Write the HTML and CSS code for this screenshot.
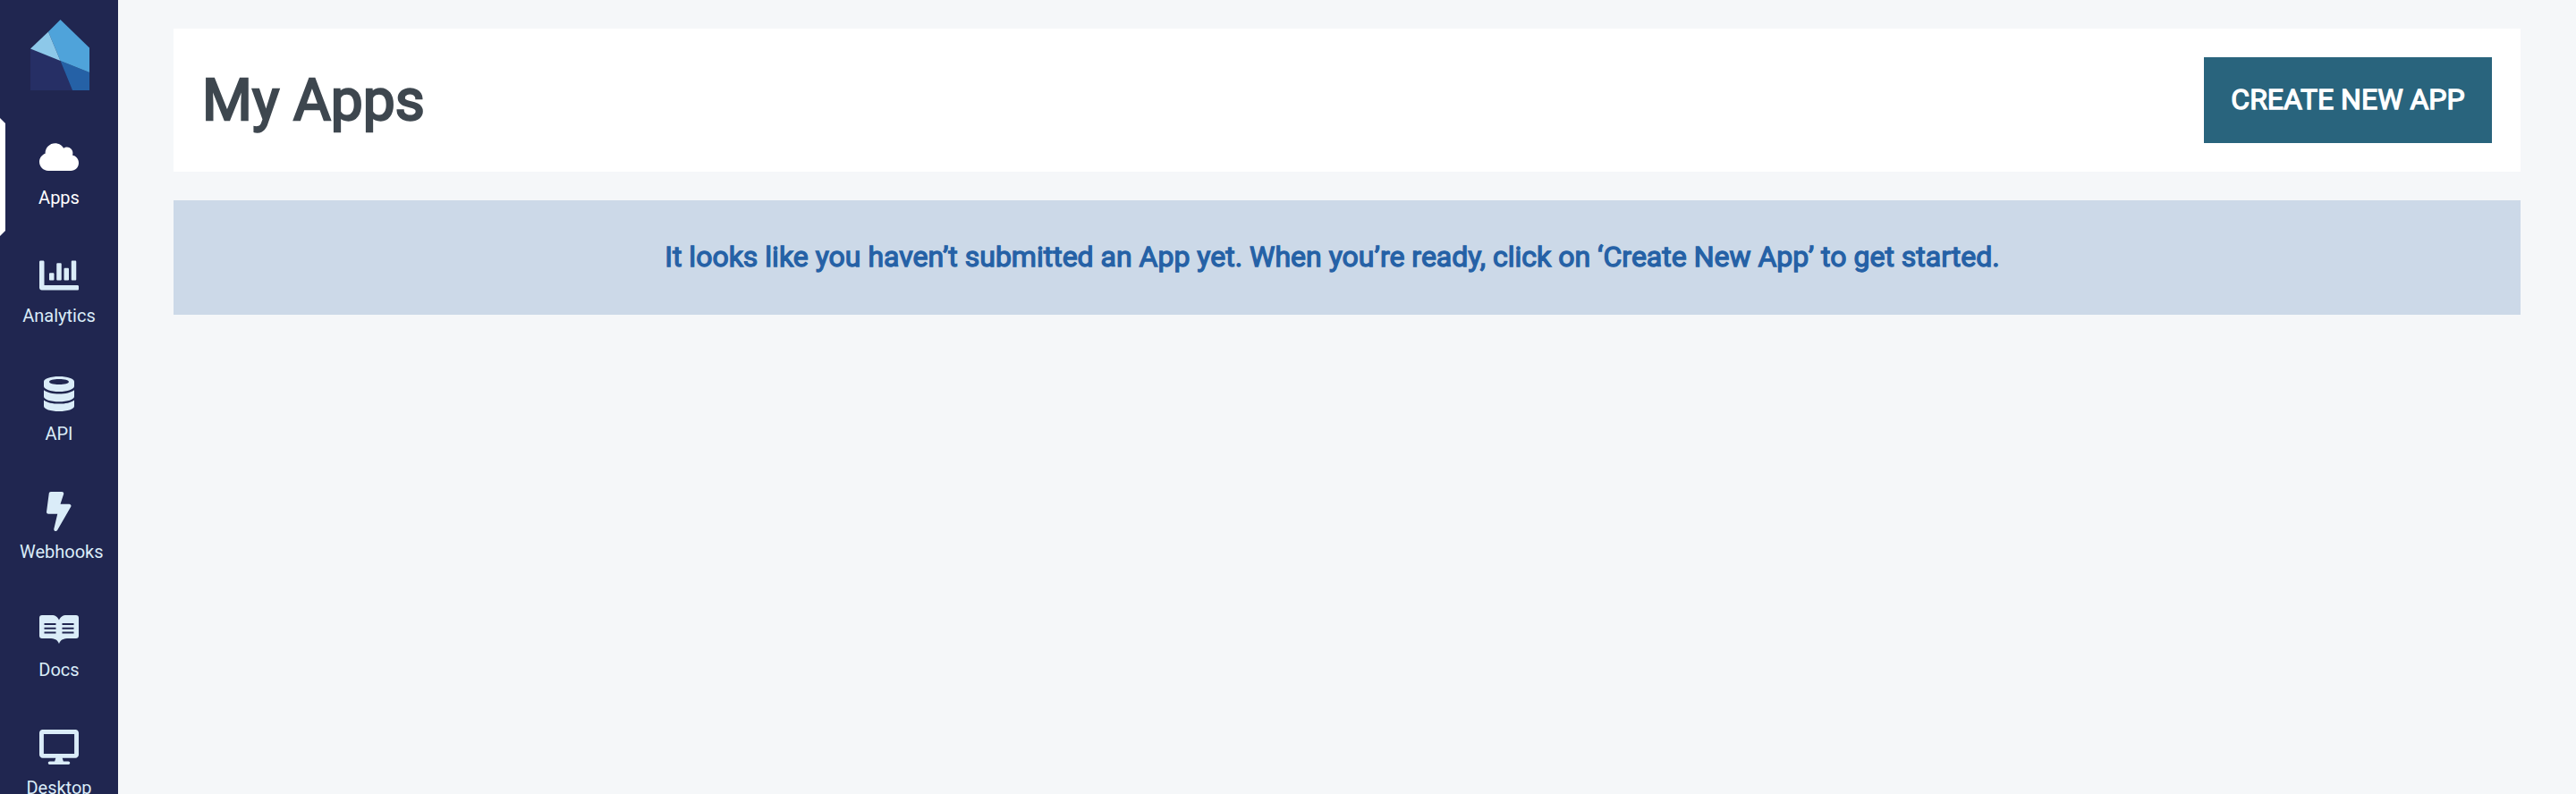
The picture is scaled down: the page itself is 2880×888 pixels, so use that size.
FILE: index.html
```html
<!DOCTYPE html>
<html lang="en">
<head>
<meta charset="utf-8">
<title>My Apps</title>
<link rel="stylesheet" href="styles.css">
</head>
<body>
<div class="layout">
  <nav class="sidebar">
    <a class="logo">
      <svg width="66" height="79" viewBox="0 0 66 79">
        <path fill="#262f65" d="M0 32.500L33.500 46L47 79H0z"/>
        <path fill="#2561a6" d="M33.500 46L66 59V79H47z"/>
        <path fill="#4fa3da" d="M20 13.500L33.500 0L66 31.500V59L33.500 46z"/>
        <path fill="#8dc8e9" d="M0 32.500L20 13.500L33.500 46z"/>
      </svg>
    </a>
    <a class="item active">
      <span class="icon"><svg width="44" height="35.200" viewBox="0 0 640 512"><path d="M537.600 226.600c4.100-10.700 6.400-22.400 6.400-34.600 0-53-43-96-96-96-19.700 0-38.100 6-53.300 16.200C367 64.200 315.300 32 256 32c-88.400 0-160 71.600-160 160 0 2.700.1 5.400.2 8.100C40.200 219.800 0 273.200 0 336c0 79.500 64.500 144 144 144h368c70.700 0 128-57.300 128-128 0-61.900-44-113.600-102.400-125.400z"/></svg></span>
      <span class="label">Apps</span>
    </a>
    <a class="item">
      <span class="icon"><svg width="44" height="44" viewBox="0 0 512 512"><path d="M332.800 320h38.400c6.400 0 12.800-6.400 12.800-12.800V172.800c0-6.400-6.400-12.800-12.800-12.800h-38.400c-6.400 0-12.800 6.400-12.800 12.800v134.400c0 6.400 6.400 12.800 12.800 12.800zm96 0h38.400c6.400 0 12.800-6.400 12.800-12.800V76.800c0-6.400-6.400-12.800-12.800-12.800h-38.400c-6.400 0-12.800 6.400-12.800 12.800v230.400c0 6.400 6.400 12.800 12.800 12.800zm-288 0h38.400c6.400 0 12.800-6.400 12.800-12.800v-70.400c0-6.400-6.400-12.800-12.800-12.800h-38.400c-6.400 0-12.800 6.400-12.800 12.800v70.400c0 6.400 6.400 12.800 12.800 12.800zm96 0h38.400c6.400 0 12.800-6.400 12.800-12.800V108.800c0-6.400-6.400-12.800-12.800-12.800h-38.400c-6.400 0-12.800 6.400-12.800 12.800v198.400c0 6.400 6.400 12.800 12.800 12.800zM496 384H64V80c0-8.840-7.160-16-16-16H16C7.160 64 0 71.160 0 80v336c0 17.670 14.330 32 32 32h464c8.840 0 16-7.160 16-16v-32c0-8.840-7.160-16-16-16z"/></svg></span>
      <span class="label">Analytics</span>
    </a>
    <a class="item">
      <span class="icon"><svg width="34" height="39" viewBox="0 0 34 39"><path fill-rule="evenodd" d="M17 0C26.400 0 34 2.500 34 5.800V11C34 14.300 26.400 17 17 17S0 14.300 0 11V5.800C0 2.500 7.600 0 17 0zM17 3C10.800 3 6 4.300 6 6s4.800 3 11 3 11-1.300 11-3-4.800-3-11-3zM0 15.200C3.500 18 9.800 19.500 17 19.500S30.500 18 34 15.200V22.400C34 25.700 26.400 28.200 17 28.200S0 25.700 0 22.400zM0 26.400C3.500 29.200 9.800 30.600 17 30.600S30.500 29.200 34 26.400V33.200C34 36.500 26.400 39 17 39S0 36.500 0 33.200z"/></svg></span>
      <span class="label">API</span>
    </a>
    <a class="item">
      <span class="icon"><svg width="27.500" height="44" viewBox="0 0 320 512"><path d="M296 160H180.600l42.600-129.800C227.200 15 215.700 0 200 0H56C44 0 33.800 8.900 32.200 20.800l-32 240C-1.700 275.200 9.500 288 24 288h118.700L96.600 482.500c-3.600 15.200 8 29.500 23.300 29.500 8.400 0 16.400-4.400 20.800-12l176-304c9.300-15.900-2.200-36-20.700-36z"/></svg></span>
      <span class="label">Webhooks</span>
    </a>
    <a class="item">
      <span class="icon"><svg width="44" height="32" viewBox="0 0 44 32"><path fill-rule="evenodd" d="M3 0H13.500C18 0 20.500 2 22 5.500C23.500 2 26 0 30.500 0H41Q44 0 44 3V23Q44 26 41 26H33C27 26 23.500 27.500 22 32C20.500 27.500 17 26 11 26H3Q0 26 0 23V3Q0 0 3 0zM5.500 9V11H18.500V9zM5.500 13.800V15.800H18.500V13.800zM5.500 18.500V20.500H18.500V18.500zM25.500 9V11H38.500V9zM25.500 13.800V15.800H38.500V13.800zM25.500 18.500V20.500H38.500V18.500z"/></svg></span>
      <span class="label">Docs</span>
    </a>
    <a class="item">
      <span class="icon"><svg width="44" height="39.100" viewBox="0 0 576 512"><path d="M528 0H48C21.500 0 0 21.500 0 48v320c0 26.500 21.500 48 48 48h192l-16 48h-72c-13.300 0-24 10.700-24 24s10.700 24 24 24h272c13.300 0 24-10.700 24-24s-10.700-24-24-24h-72l-16-48h192c26.500 0 48-21.500 48-48V48c0-26.500-21.500-48-48-48zm-16 352H64V64h448v288z"/></svg></span>
      <span class="label">Desktop</span>
    </a>
  </nav>
  <main class="content">
    <header class="page-header">
      <h1 class="title">My Apps</h1>
      <button class="create">CREATE NEW APP</button>
    </header>
    <section class="notice"><p class="notice-text">It looks like you haven’t submitted an App yet. When you’re ready, click on ‘Create New App’ to get started.</p></section>
  </main>
</div>
</body>
</html>
```
FILE: styles.css
```css
* { box-sizing: border-box; }
body { margin: 0; font-family: Roboto, sans-serif; background: #f5f7f9; }
.layout { display: flex; height: 888px; overflow: hidden; }
.sidebar { width: 132px; flex: none; background: #202650; color: #daecf8; }
.logo { display: block; height: 132px; padding: 22px 0 0 34px; }
.logo svg { display: block; }
.item { position: relative; display: block; height: 132px; padding: 22px 22px 0; }
.active { color: #fff; }
.active::before {
  content: "";
  position: absolute;
  left: 0;
  top: 0;
  width: 6px;
  height: 132px;
  background: #fff;
  clip-path: polygon(0 0, 100% 6px, 100% calc(100% - 6px), 0 100%);
}
.icon { display: flex; height: 44px; align-items: center; justify-content: center; }
.icon svg { display: block; fill: currentColor; }
.label { display: block; margin-top: 11px; font-size: 20px; line-height: 24px; text-align: center; white-space: nowrap; }
.content { flex: 1; padding: 32px 62px; }
.page-header {
  display: flex;
  align-items: center;
  justify-content: space-between;
  height: 160px;
  padding: 0 32px;
  background: #fff;
}
.title { margin: 0; padding-top: 2px; font-size: 64px; font-weight: 400; line-height: 76px; color: #3e474f; -webkit-text-stroke: 2.4px currentColor; }
.create {
  width: 322px;
  height: 96px;
  padding: 0 0 2px;
  border: 0;
  font: 400 32px Roboto, sans-serif;
  color: #fff;
  background: #29647d;
  -webkit-text-stroke: 1.3px currentColor;
}
.notice { display: flex; align-items: center; justify-content: center; height: 128px; margin-top: 32px; padding: 0 33px 2px 0; background: #ccd9e8; }
.notice-text { margin: 0; font-size: 32px; line-height: 38px; color: #2561a6; -webkit-text-stroke: 1.3px currentColor; }
```
